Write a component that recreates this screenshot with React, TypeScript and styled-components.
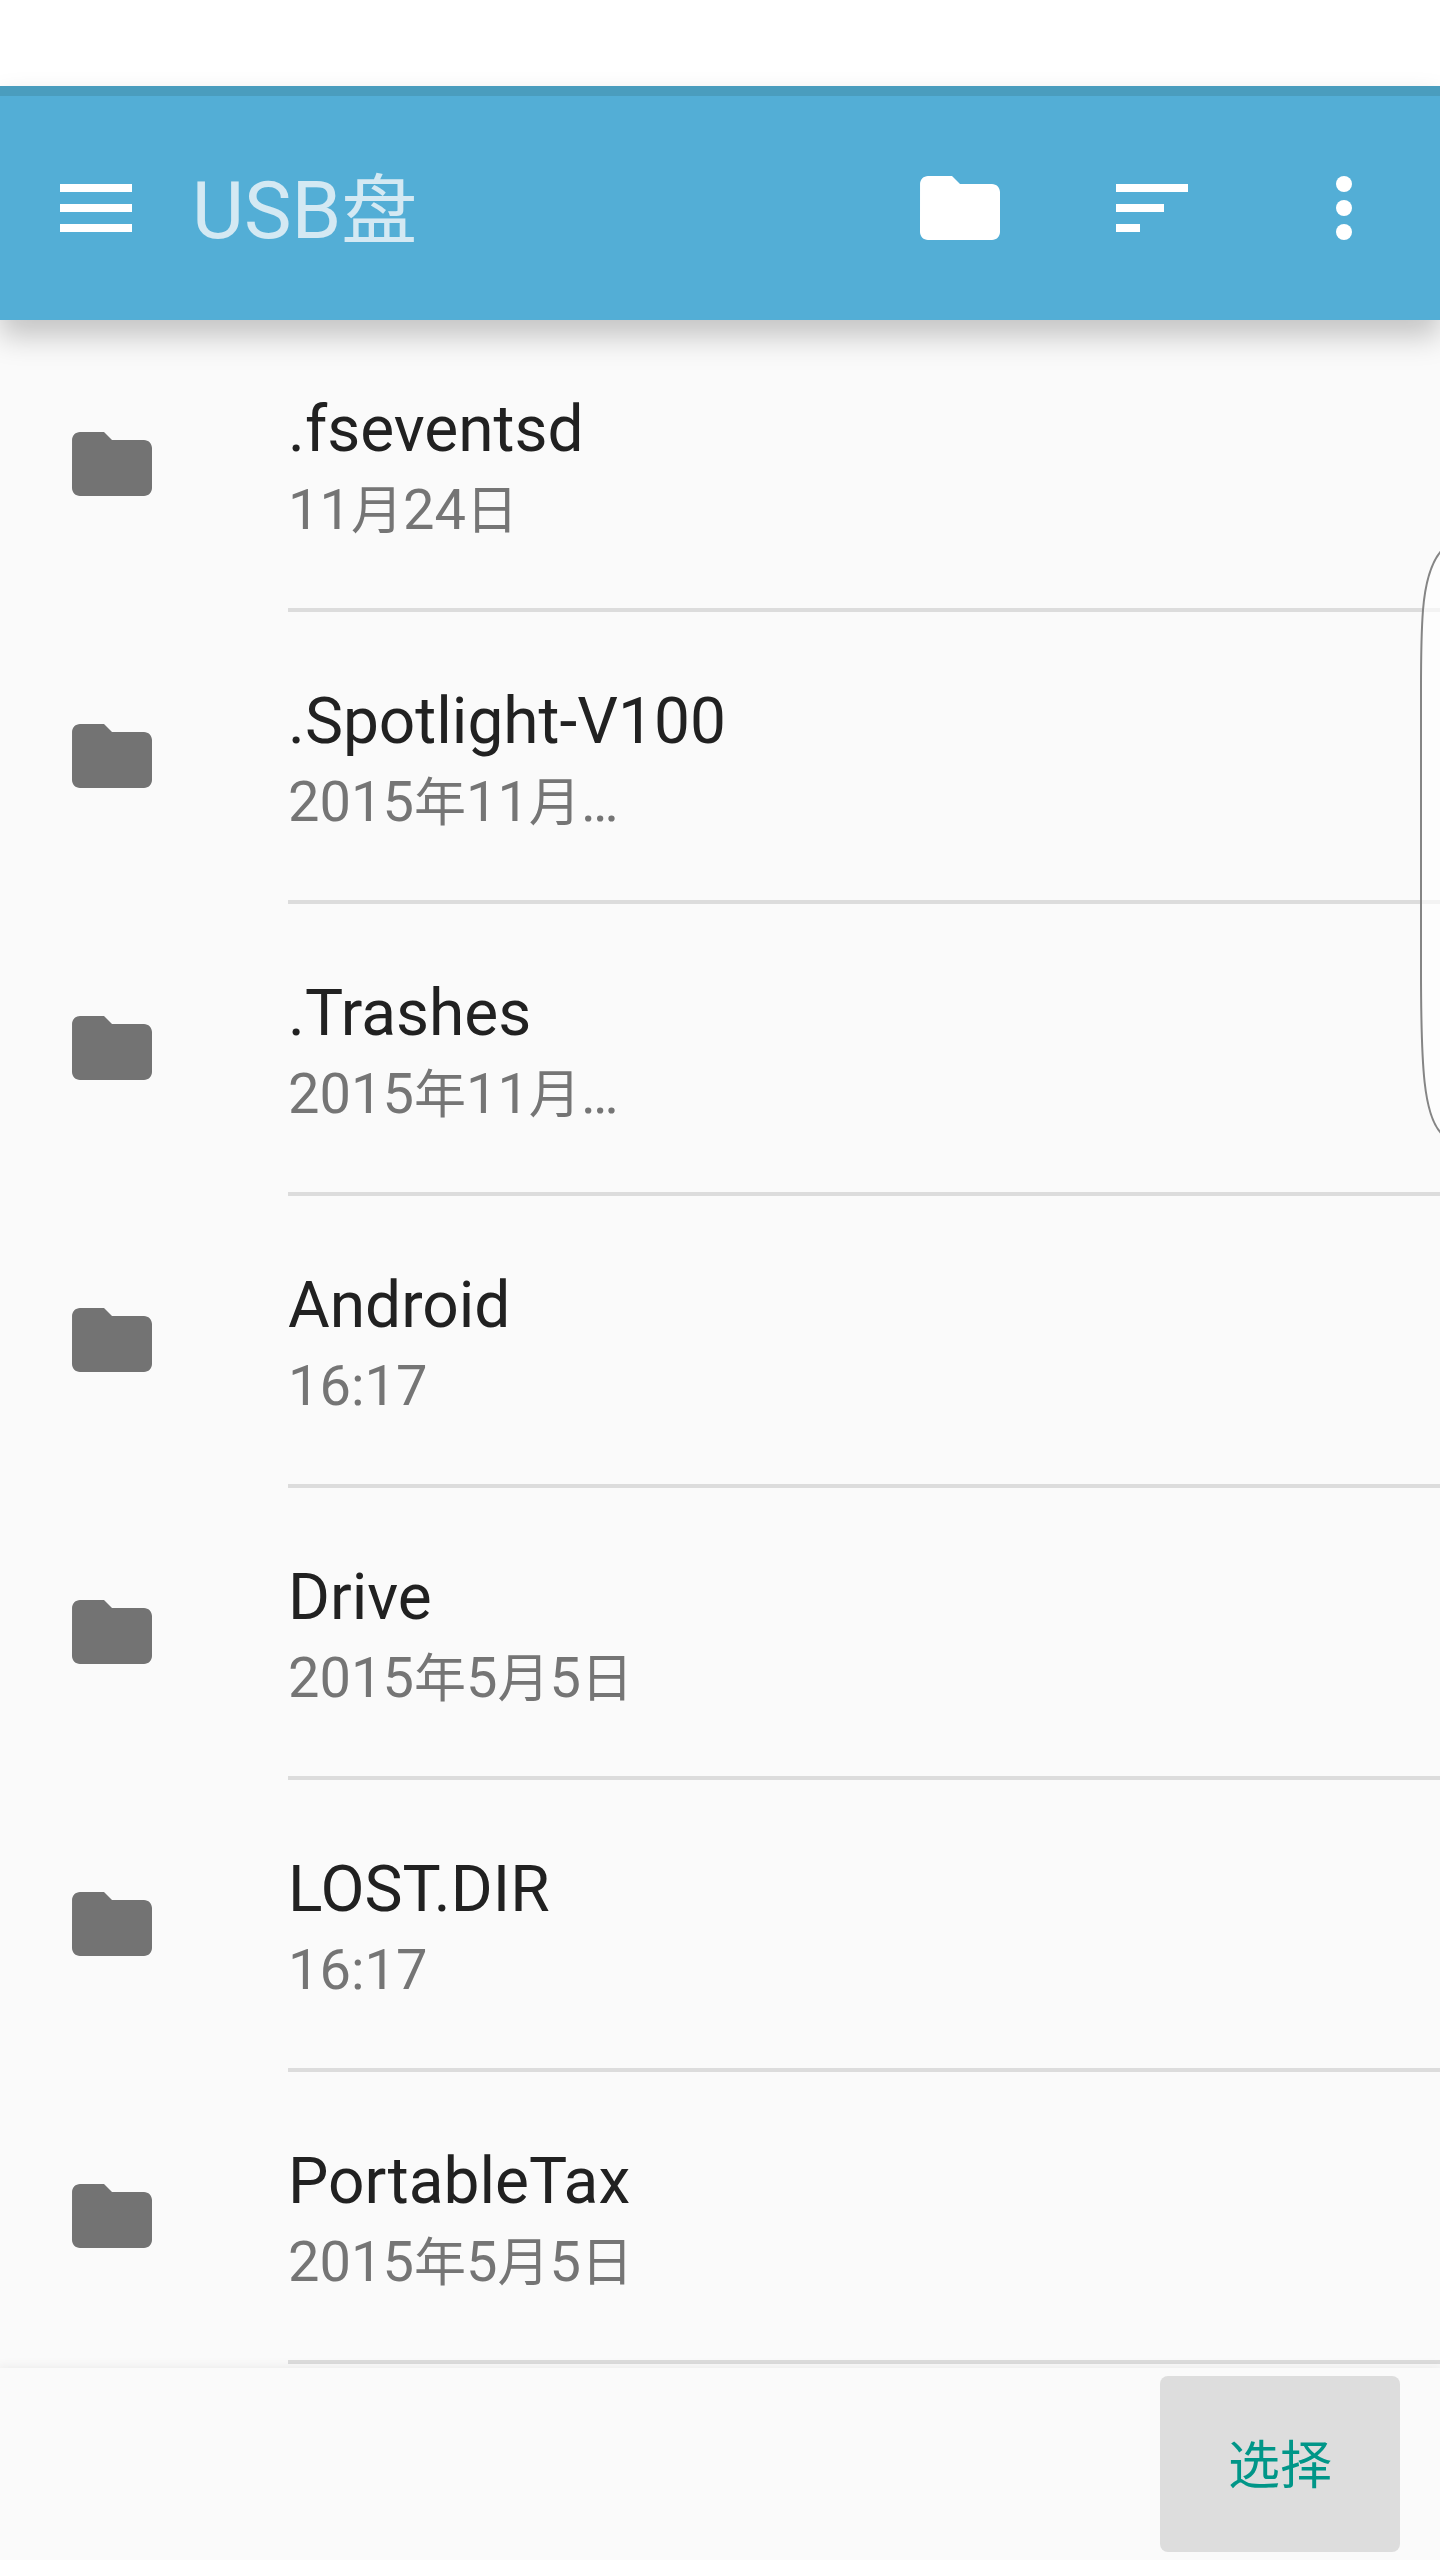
import React from "react";
import styled, { createGlobalStyle } from "styled-components";

const GlobalStyle = createGlobalStyle`
  *, *::before, *::after { box-sizing: border-box; }
  body {
    margin: 0;
    background: #fafafa;
    font-family: Roboto, "Noto Sans CJK SC", sans-serif;
  }
`;

const Screen = styled.div`
  position: relative;
  display: flex;
  flex-direction: column;
  height: 100vh;
  overflow: hidden;
  background: #fafafa;
`;

const StatusBar = styled.div`
  flex: none;
  height: 86px;
  background: #ffffff;
`;

const AppBar = styled.header`
  position: relative;
  z-index: 1;
  flex: none;
  display: flex;
  align-items: center;
  height: 234px;
  border-top: 10px solid #4a9dbe;
  background: #53aed6;
  box-shadow: 0 16px 28px rgba(0, 0, 0, 0.22);
`;

const BarButton = styled.button`
  flex: none;
  display: grid;
  place-items: center;
  width: 192px;
  height: 224px;
  padding: 0;
  border: 0;
  background: none;
  color: #ffffff;
`;

const Title = styled.h1`
  flex: 1;
  min-width: 0;
  margin: 0;
  padding-top: 6px;
  font-size: 80px;
  font-weight: 400;
  line-height: 96px;
  color: #d4e9f3;
`;

const Icon = styled.svg`
  display: block;
  width: 96px;
  height: 96px;
  fill: currentColor;
`;

const FileList = styled.ul`
  flex: 1;
  min-height: 0;
  margin: 0;
  padding: 0;
  overflow: hidden;
  list-style: none;
`;

const Row = styled.li`
  display: flex;
  height: 292px;
`;

const RowIcon = styled.div`
  flex: none;
  width: 288px;
  padding: 96px 64px;
  color: #737373;
`;

const RowText = styled.div`
  flex: 1;
  min-width: 0;
  padding-top: 70px;
  border-bottom: 4px solid #dcdcdc;
`;

const Name = styled.div`
  font-size: 64px;
  line-height: 80px;
  color: #212121;
`;

const Modified = styled.div`
  font-size: 56px;
  line-height: 80px;
  color: #757575;
`;

const Han = styled.span<{ $size: number }>`
  font-size: ${(p) => p.$size}px;
  line-height: 1;
`;

const Footer = styled.footer`
  position: relative;
  flex: none;
  display: flex;
  justify-content: flex-end;
  padding: 8px 40px;
  background: #fafafa;
  box-shadow: 0 0 10px 2px rgba(0, 0, 0, 0.06);
`;

const SelectButton = styled.button`
  width: 240px;
  height: 176px;
  padding: 6px 0 0;
  border: 0;
  border-radius: 8px;
  background: #dddddd;
  color: #009688;
  font-family: inherit;
  font-size: 52px;
  line-height: 64px;
`;

const EdgeHandle = styled.svg`
  position: absolute;
  z-index: 2;
  top: 540px;
  right: 0;
  width: 24px;
  height: 600px;
`;

const FolderIcon = () => (
  <Icon viewBox="0 0 24 24" aria-hidden="true">
    <path d="M10 4H4c-1.100 0-1.990.9-1.990 2L2 18c0 1.100.9 2 2 2h16c1.100 0 2-.9 2-2V8c0-1.100-.9-2-2-2h-8l-2-2z" />
  </Icon>
);

// Han characters are set slightly smaller than the Latin letters and digits beside them.
const MixedText = ({ text, hanSize }: { text: string; hanSize: number }) => (
  <>
    {text.split(/([\u4e00-\u9fff]+)/).map((part, i) =>
      i % 2 ? (
        <Han key={i} $size={hanSize}>
          {part}
        </Han>
      ) : (
        part
      )
    )}
  </>
);

const files = [
  { name: ".fseventsd", modified: "11月24日" },
  { name: ".Spotlight-V100", modified: "2015年11月…" },
  { name: ".Trashes", modified: "2015年11月…" },
  { name: "Android", modified: "16:17" },
  { name: "Drive", modified: "2015年5月5日" },
  { name: "LOST.DIR", modified: "16:17" },
  { name: "PortableTax", modified: "2015年5月5日" },
];

export default function App() {
  return (
    <Screen>
      <GlobalStyle />
      <StatusBar />
      <AppBar>
        <BarButton aria-label="菜单">
          <Icon viewBox="0 0 24 24" aria-hidden="true">
            <path d="M3 18h18v-2H3v2zm0-5h18v-2H3v2zm0-7v2h18V6H3z" />
          </Icon>
        </BarButton>
        <Title>
          <MixedText text="USB盘" hanSize={76} />
        </Title>
        <BarButton aria-label="新建文件夹">
          <FolderIcon />
        </BarButton>
        <BarButton aria-label="排序">
          <Icon viewBox="0 0 24 24" aria-hidden="true">
            <path d="M3 18h6v-2H3v2zM3 6v2h18V6H3zm0 7h12v-2H3v2z" />
          </Icon>
        </BarButton>
        <BarButton aria-label="更多选项">
          <Icon viewBox="0 0 24 24" aria-hidden="true">
            <circle cx="12" cy="6" r="2" />
            <circle cx="12" cy="12" r="2" />
            <circle cx="12" cy="18" r="2" />
          </Icon>
        </BarButton>
      </AppBar>
      <FileList>
        {files.map((file) => (
          <Row key={file.name}>
            <RowIcon>
              <FolderIcon />
            </RowIcon>
            <RowText>
              <Name>{file.name}</Name>
              <Modified>
                <MixedText text={file.modified} hanSize={52} />
              </Modified>
            </RowText>
          </Row>
        ))}
      </FileList>
      <Footer>
        <SelectButton>选择</SelectButton>
      </Footer>
      <EdgeHandle viewBox="0 0 24 600" aria-hidden="true">
        <path
          d="M25 11C14 24 9 45 7 70C5 95 5 115 5 150V430C5 530 8 575 25 593"
          fill="#ffffff"
          fillOpacity="0.65"
          stroke="#858585"
          strokeWidth="2"
        />
      </EdgeHandle>
    </Screen>
  );
}
